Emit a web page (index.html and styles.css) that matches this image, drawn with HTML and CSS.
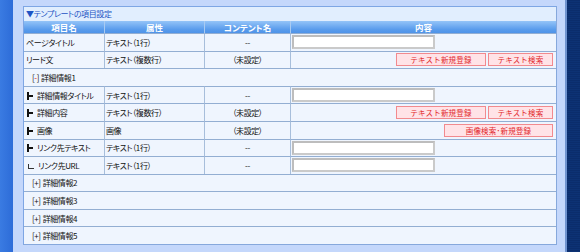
FILE: index.html
```html
<!DOCTYPE html>
<html lang="ja">
<head>
<meta charset="utf-8">
<title>テンプレートの項目設定</title>
<link rel="stylesheet" href="styles.css">
</head>
<body>
<div class="page">
  <div class="side"></div>
  <div class="main">
    <div class="panel">
      <div class="ptitle">▼テンプレートの項目設定</div>
      <div class="grid">
        <div class="th">項目名</div>
        <div class="th sep">属性</div>
        <div class="th sep">コンテント名</div>
        <div class="th sep">内容</div>

        <div class="td c1">ページタイトル</div>
        <div class="td c2">テキスト（1行）</div>
        <div class="td c3">--</div>
        <div class="td c4"><span class="input"></span></div>

        <div class="td c1">リード文</div>
        <div class="td c2">テキスト（複数行）</div>
        <div class="td c3">（未設定）</div>
        <div class="td c4 btns"><span class="btn b-new">テキスト新規登録</span><span class="btn b-search">テキスト検索</span></div>

        <div class="td group"><span class="tog">[<span class="minus">-</span>]</span>詳細情報1</div>

        <div class="td c1"><span class="tree"></span>詳細情報タイトル</div>
        <div class="td c2">テキスト（1行）</div>
        <div class="td c3">--</div>
        <div class="td c4"><span class="input"></span></div>

        <div class="td c1"><span class="tree"></span>詳細内容</div>
        <div class="td c2">テキスト（複数行）</div>
        <div class="td c3">（未設定）</div>
        <div class="td c4 btns"><span class="btn b-new">テキスト新規登録</span><span class="btn b-search">テキスト検索</span></div>

        <div class="td c1"><span class="tree"></span>画像</div>
        <div class="td c2">画像</div>
        <div class="td c3">（未設定）</div>
        <div class="td c4 btns"><span class="btn b-img">画像検索･新規登録</span></div>

        <div class="td c1"><span class="tree"></span>リンク先テキスト</div>
        <div class="td c2">テキスト（1行）</div>
        <div class="td c3">--</div>
        <div class="td c4"><span class="input"></span></div>

        <div class="td c1"><span class="tree last"></span>リンク先URL</div>
        <div class="td c2">テキスト（1行）</div>
        <div class="td c3">--</div>
        <div class="td c4"><span class="input"></span></div>

        <div class="td group"><span class="tog">[+]</span>詳細情報2</div>
        <div class="td group"><span class="tog">[+]</span>詳細情報3</div>
        <div class="td group"><span class="tog">[+]</span>詳細情報4</div>
        <div class="td group"><span class="tog">[+]</span>詳細情報5</div>
      </div>
    </div>
  </div>
  <div class="edge"></div>
  <div class="navy"></div>
</div>
</body>
</html>
```

FILE: styles.css
```css
html, body {
  margin: 0;
  padding: 0;
}
body {
  width: 580px;
  height: 252px;
  overflow: hidden;
  font-family: "Noto Sans CJK JP", "Noto Sans", sans-serif;
  font-size: 8px;
  letter-spacing: -0.4px;
  font-feature-settings: "palt";
  color: #111;
}
.page {
  display: flex;
  height: 252px;
}
.side {
  width: 13px;
  flex: none;
  background: linear-gradient(to right, #3a7be2, #2d6cd8);
}
.main {
  flex: 1;
  background: #c4d7fb;
  padding: 6px 8px 0 10px;
}
.edge {
  width: 2px;
  flex: none;
  background: #6f93cf;
}
.navy {
  width: 13px;
  flex: none;
  background: repeating-linear-gradient(to bottom, #0b2d6c 0, #0b2d6c 1px, #0d3274 1px, #0d3274 2px);
}
.panel {
  width: 534px;
  box-sizing: border-box;
  border: 1px solid #7ea6e4;
  border-right-color: #86a8dc;
  border-bottom-color: #86a8dc;
  background: #dfecfd;
}
.ptitle {
  height: 14px;
  line-height: 14px;
  padding-left: 2px;
  color: #1d54c4;
  background: #e1eefe;
}
.grid {
  display: grid;
  grid-template-columns: 80px 100px 86px 1fr;
  grid-template-rows: 12px repeat(12, 1fr);
  height: 223px;
}
.th {
  display: flex;
  align-items: center;
  justify-content: center;
  color: #fff;
  font-weight: bold;
  font-size: 8.5px;
  letter-spacing: 0;
  background: linear-gradient(to bottom, #94c4f8, #5a9cec 70%, #4f93e8);
}
.th.sep {
  border-left: 1px solid #a9cbf2;
}
.td {
  display: flex;
  align-items: center;
  border-top: 1px solid #93aed2;
  background: #eff5fe;
  white-space: nowrap;
  overflow: hidden;
}
.c1 {
  padding-left: 2px;
}
.c2 {
  border-left: 1px solid #a7bedb;
  padding-left: 1px;
}
.c3 {
  border-left: 1px solid #a7bedb;
  justify-content: center;
}
.c4 {
  border-left: 1px solid #a7bedb;
  padding-left: 1px;
}
.group {
  grid-column: 1 / -1;
  padding-left: 8px;
}
.tog {
  margin-right: 2px;
}
.minus {
  color: #e02020;
}
.tree {
  position: relative;
  flex: none;
  width: 6px;
  height: 8px;
  margin: 1px 4px 0 1px;
  border-left: 2px solid #111;
  box-sizing: border-box;
}
.tree::after {
  content: "";
  position: absolute;
  left: 0;
  top: 3px;
  width: 4px;
  height: 2px;
  background: #111;
}
.tree.last {
  width: 6px;
  height: 5px;
  margin: 3px 4px 0 2px;
  border-left: 1.5px solid #333;
}
.tree.last::after {
  top: auto;
  bottom: 0;
  width: 5px;
  height: 1.5px;
  background: #333;
}
.input {
  display: block;
  width: 143px;
  height: 14px;
  box-sizing: border-box;
  background: #fff;
  border: 2px solid #cacaca;
  border-top-color: #bdbdbd;
  border-left-color: #bdbdbd;
}
.btns {
  justify-content: flex-end;
  padding-right: 3px;
  gap: 2px;
}
.btn {
  display: flex;
  align-items: center;
  justify-content: center;
  height: 13px;
  box-sizing: border-box;
  border: 1px solid #f28a8e;
  background: #ffe3e7;
  color: #e2282c;
  font-size: 7.5px;
  font-feature-settings: normal;
  letter-spacing: 0.2px;
}
.b-new {
  width: 90px;
}
.b-search {
  width: 65px;
}
.b-img {
  width: 109px;
}
```
